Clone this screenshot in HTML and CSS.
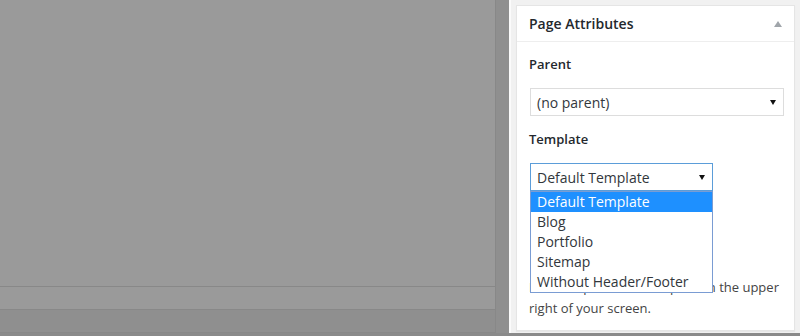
FILE: index.html
```html
<!DOCTYPE html>
<html lang="en">
  <head>
    <meta charset="UTF-8" />
    <title>Page Attributes</title>
    <link rel="stylesheet" href="styles.css">
  </head>
  <body>
    <div class="page">
      <div class="workspace">
        <div class="main">
          <div class="editor">
            <div class="editor-body"></div>
            <div class="editor-row"></div>
            <div class="editor-footer"></div>
          </div>
        </div>

        <div class="sidebar">
          <div class="postbox">
            <div class="postbox-header">
              <h2 class="hndle">Page Attributes</h2>
              <span class="toggle-indicator"></span>
            </div>
            <div class="inside">
              <p class="attr-label">Parent</p>
              <div class="select select-wide">
                <span>(no parent)</span>
                <span class="caret"></span>
              </div>

              <p class="attr-label">Template</p>
              <div class="select-wrap">
                <div class="select select-focus">
                  <span>Default Template</span>
                  <span class="caret"></span>
                </div>
                <ul class="dropdown">
                  <li class="selected">Default Template</li>
                  <li>Blog</li>
                  <li>Portfolio</li>
                  <li>Sitemap</li>
                  <li>Without Header/Footer</li>
                </ul>
              </div>

              <p class="help">Need help? Use the Help tab in the upper right of your screen.</p>
            </div>
          </div>
        </div>
      </div>
      <div class="bottom-strip"></div>
    </div>
  </body>
</html>
```

FILE: styles.css
```css
body {
  margin: 0;
  font-family: "Open Sans", "Liberation Sans", sans-serif;
  color: #23282d;
  width: 800px;
  height: 336px;
  overflow: hidden;
}

.page {
  display: flex;
  flex-direction: column;
  height: 336px;
}

.workspace {
  display: flex;
  height: 333px;
}

.bottom-strip {
  height: 3px;
  background-color: #8a8a8a;
}

/* dimmed editor area */
.main {
  width: 509px;
  background-color: #8f8f8f;
}

.editor {
  width: 495px;
  height: 100%;
  border-right: 1px solid #888;
  display: flex;
  flex-direction: column;
}

.editor-body {
  height: 286px;
  background-color: #9a9a9a;
  border-bottom: 1px solid #888;
}

.editor-row {
  height: 22px;
  background-color: #9a9a9a;
  border-bottom: 1px solid #888;
}

.editor-footer {
  height: 22px;
  background-color: #8f8f8f;
  border-bottom: 1px solid #888;
}

/* sidebar */
.sidebar {
  flex: 1;
  background-color: #f1f1f1;
  border-left: 2px solid #fbfbfb;
  padding: 5px 5px 0 5px;
}

.postbox {
  background-color: #fff;
  border: 1px solid #e5e5e5;
  box-shadow: 0 1px 1px rgba(0, 0, 0, 0.04);
}

.postbox-header {
  height: 35px;
  display: flex;
  align-items: center;
  justify-content: space-between;
  padding: 0 12px;
  border-bottom: 1px solid #eee;
}

.hndle {
  margin: 0;
  font-size: 14px;
  font-weight: 600;
  line-height: 20px;
  color: #23282d;
}

.toggle-indicator {
  width: 0;
  height: 0;
  border-left: 4px solid transparent;
  border-right: 4px solid transparent;
  border-bottom: 6px solid #a0a5aa;
  margin-top: 1px;
}

.inside {
  padding: 0 9px 11px 12px;
}

.attr-label {
  margin: 13px 0 0 0;
  font-size: 13px;
  font-weight: 600;
  line-height: 20px;
  color: #23282d;
}

.inside .attr-label:first-child {
  margin-top: 12px;
}

.select {
  margin: 14px 0 0 1px;
  height: 28px;
  box-sizing: border-box;
  border: 1px solid #ddd;
  background-color: #fff;
  display: flex;
  align-items: center;
  justify-content: space-between;
  padding: 0 7px 0 6px;
  font-size: 14px;
  color: #32373c;
}

.select-wide {
  width: 254px;
}

.select-wrap {
  position: relative;
  width: 184px;
}

.select-focus {
  width: 183px;
  border-color: #5b9dd9;
}

.caret {
  width: 0;
  height: 0;
  border-left: 3px solid transparent;
  border-right: 3px solid transparent;
  border-top: 5px solid #111;
}

/* open option list of the template select */
.dropdown {
  position: absolute;
  top: 100%;
  left: 1px;
  width: 183px;
  box-sizing: border-box;
  margin: 0;
  padding: 0;
  list-style: none;
  background-color: #fff;
  border: 1px solid #7a9cd3;
  font-size: 14px;
  color: #32373c;
  z-index: 2;
}

.dropdown li {
  height: 20px;
  line-height: 20px;
  padding-left: 6px;
  white-space: nowrap;
}

.dropdown li.selected {
  background-color: #1e90ff;
  color: #fff;
}

.help {
  margin: 86px 0 0 0;
  font-size: 13px;
  line-height: 21px;
  color: #444;
}
```
